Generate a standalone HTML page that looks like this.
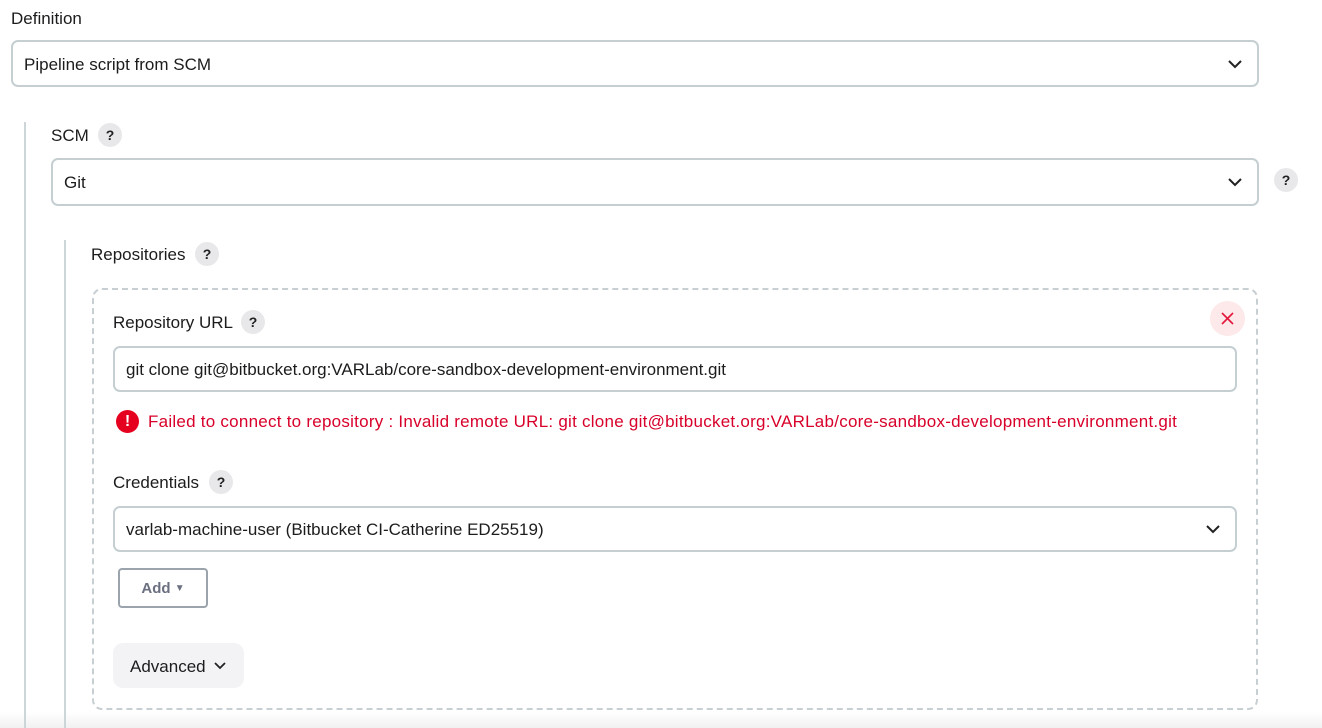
<!DOCTYPE html>
<html><head><style>
body{margin:0;width:1322px;height:728px;background:#fff;font-family:"Liberation Sans",sans-serif;font-size:17px;color:#1c1c1f;position:relative;overflow:hidden}
.a{position:absolute}
.lbl{position:absolute;line-height:20px}
.sel{position:absolute;border:2px solid #c5cfd2;border-radius:7px;box-sizing:border-box;line-height:20px}
.sel span{position:absolute;left:11px;top:50%;transform:translateY(-45%)}
.chev{position:absolute;right:14px;top:50%;margin-top:-5px}
.q{position:absolute;width:24px;height:24px;border-radius:50%;background:#e8e8ea;text-align:center;font-weight:bold;font-size:14px;line-height:24px;color:#222}
</style></head><body>
<div class="a" style="left:0;top:712px;width:1322px;height:16px;background:linear-gradient(#fff,#f1f1f2)"></div>
<div class="lbl" style="left:11px;top:9px">Definition</div>
<div class="sel" style="left:11px;top:40px;width:1248px;height:47px"><span>Pipeline script from SCM</span><svg class="chev" width="16" height="10"><path d="M2 2l6 6 6-6" fill="none" stroke="#222" stroke-width="2"/></svg></div>
<div class="a" style="left:24px;top:122px;width:2px;height:606px;background:#cdd5d8"></div>
<div class="lbl" style="left:51px;top:126px">SCM</div><div class="q" style="left:98px;top:123px">?</div>
<div class="sel" style="left:51px;top:158px;width:1208px;height:48px"><span>Git</span><svg class="chev" width="16" height="10"><path d="M2 2l6 6 6-6" fill="none" stroke="#222" stroke-width="2"/></svg></div>
<div class="q" style="left:1274px;top:168px">?</div>
<div class="a" style="left:64px;top:240px;width:2px;height:488px;background:#cdd5d8"></div>
<div class="lbl" style="left:91px;top:245px">Repositories</div><div class="q" style="left:195px;top:242px">?</div>
<div class="a" style="left:92px;top:288px;width:1166px;height:422px;border:2px dashed #c8cfd2;border-radius:10px;box-sizing:border-box"></div>
<div class="lbl" style="left:113px;top:313px">Repository URL</div><div class="q" style="left:241px;top:310px">?</div>
<div class="a" style="left:1210px;top:301px;width:35px;height:35px;border-radius:50%;background:#fde8ea"><svg width="35" height="35"><path d="M12 12l11 11M23 12l-11 11" stroke="#e3173a" stroke-width="1.6"/></svg></div>
<div class="sel" style="left:113px;top:346px;width:1124px;height:46px"><span>git clone git@bitbucket.org:VARLab/core-sandbox-development-environment.git</span></div>
<div class="a" style="left:116px;top:410px;width:23px;height:23px;border-radius:50%;background:#e6001f;color:#fff;font-weight:bold;text-align:center;line-height:23px;font-size:16px">!</div>
<div class="lbl" style="left:148px;top:412px;color:#d8002a;letter-spacing:0.25px">Failed to connect to repository : Invalid remote URL: git clone git@bitbucket.org:VARLab/core-sandbox-development-environment.git</div>
<div class="lbl" style="left:113px;top:473px">Credentials</div><div class="q" style="left:209px;top:470px">?</div>
<div class="sel" style="left:113px;top:506px;width:1124px;height:46px"><span>varlab-machine-user (Bitbucket CI-Catherine ED25519)</span><svg class="chev" width="16" height="10"><path d="M2 2l6 6 6-6" fill="none" stroke="#222" stroke-width="2"/></svg></div>
<div class="a" style="left:118px;top:568px;width:90px;height:40px;border:2px solid #9ba4ad;border-radius:4px;box-sizing:border-box;text-align:center;line-height:38px;font-weight:bold;font-size:15px;color:#6b7080">Add <span style="font-size:10px;position:relative;top:-2px">▼</span></div>
<div class="a" style="left:113px;top:643px;width:131px;height:45px;background:#f3f3f6;border-radius:10px;line-height:48px"><span style="position:absolute;left:17px">Advanced</span><svg style="position:absolute;left:101px;top:19px" width="12" height="8"><path d="M1 1l5 5 5-5" fill="none" stroke="#222" stroke-width="1.8"/></svg></div>
</body></html>
